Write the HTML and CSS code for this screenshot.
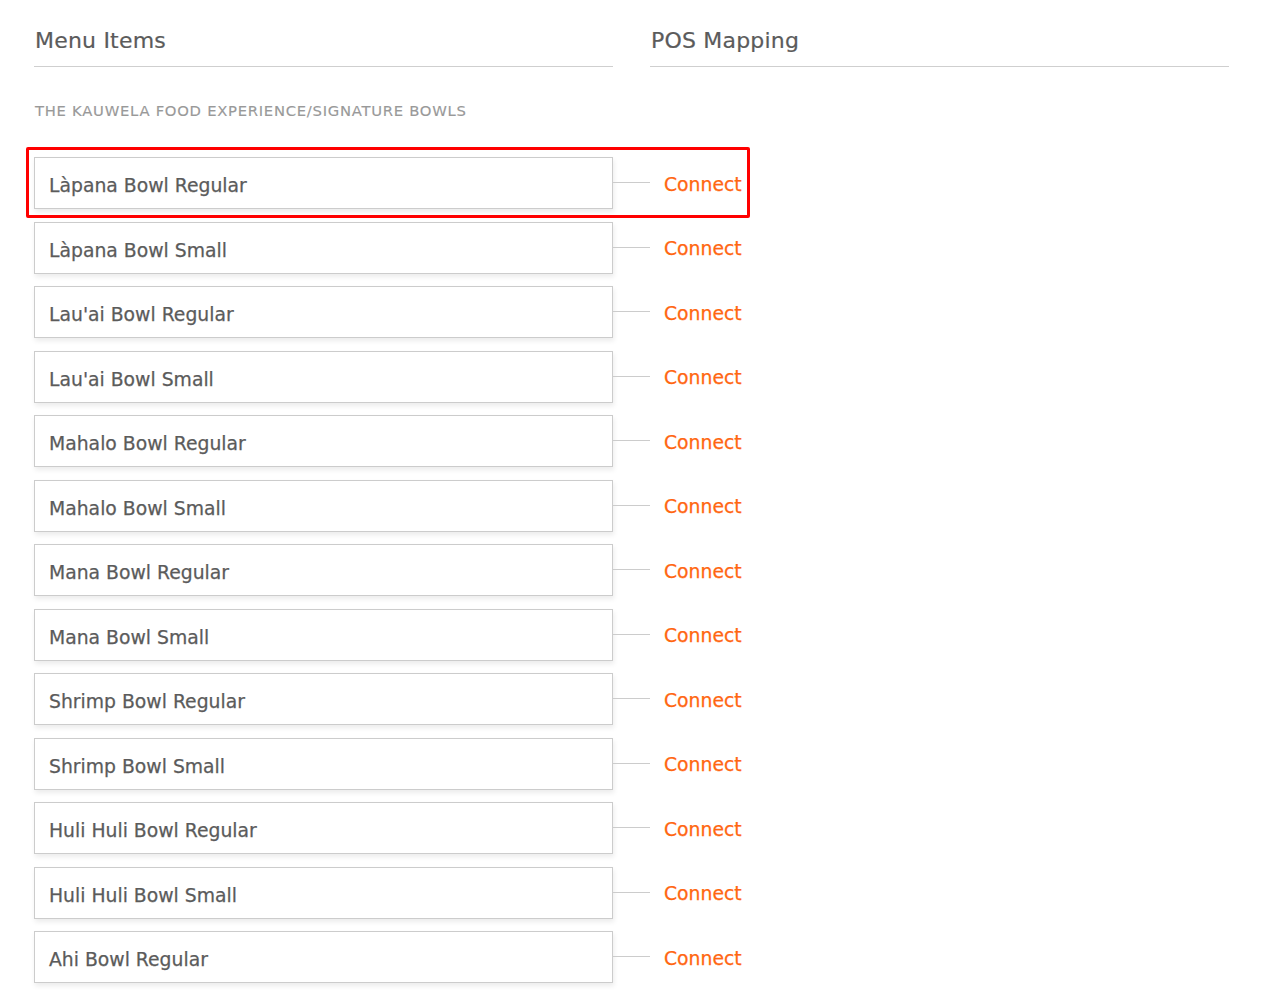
FILE: index.html
```html
<!DOCTYPE html>
<html lang="en">
<head>
<meta charset="utf-8">
<title>POS Mapping</title>
<link rel="stylesheet" href="styles.css">
</head>
<body>
<div class="page">
  <div class="headers">
    <h2 class="col-title">Menu Items</h2>
    <h2 class="col-title">POS Mapping</h2>
  </div>
  <div class="category">THE KAUWELA FOOD EXPERIENCE/SIGNATURE BOWLS</div>
  <ul class="rows">
    <li class="row highlight"><div class="item">Làpana Bowl Regular</div><span class="link-line"></span><a class="connect">Connect</a></li>
    <li class="row"><div class="item">Làpana Bowl Small</div><span class="link-line"></span><a class="connect">Connect</a></li>
    <li class="row"><div class="item">Lau'ai Bowl Regular</div><span class="link-line"></span><a class="connect">Connect</a></li>
    <li class="row"><div class="item">Lau'ai Bowl Small</div><span class="link-line"></span><a class="connect">Connect</a></li>
    <li class="row"><div class="item">Mahalo Bowl Regular</div><span class="link-line"></span><a class="connect">Connect</a></li>
    <li class="row"><div class="item">Mahalo Bowl Small</div><span class="link-line"></span><a class="connect">Connect</a></li>
    <li class="row"><div class="item">Mana Bowl Regular</div><span class="link-line"></span><a class="connect">Connect</a></li>
    <li class="row"><div class="item">Mana Bowl Small</div><span class="link-line"></span><a class="connect">Connect</a></li>
    <li class="row"><div class="item">Shrimp Bowl Regular</div><span class="link-line"></span><a class="connect">Connect</a></li>
    <li class="row"><div class="item">Shrimp Bowl Small</div><span class="link-line"></span><a class="connect">Connect</a></li>
    <li class="row"><div class="item">Huli Huli Bowl Regular</div><span class="link-line"></span><a class="connect">Connect</a></li>
    <li class="row"><div class="item">Huli Huli Bowl Small</div><span class="link-line"></span><a class="connect">Connect</a></li>
    <li class="row"><div class="item">Ahi Bowl Regular</div><span class="link-line"></span><a class="connect">Connect</a></li>
  </ul>
</div>
</body>
</html>
```
FILE: styles.css
```css
html, body {
  margin: 0;
  padding: 0;
  background: #fff;
}
body {
  font-family: "DejaVu Sans", "Liberation Sans", sans-serif;
  color: #5b5b5b;
  overflow: hidden;
}
.page {
  padding: 0 36px 0 34px;
}
.headers {
  display: grid;
  grid-template-columns: 579px 579px;
  column-gap: 37px;
}
.col-title {
  margin: 0;
  padding: 26px 0 0 1px;
  height: 40px;
  font-size: 22px;
  font-weight: normal;
  line-height: 30px;
  letter-spacing: 0.2px;
  color: #5b5b5b;
  border-bottom: 1px solid #cfcfcf;
  -webkit-text-stroke: 0.2px #5b5b5b;
}
.category {
  margin: 36px 0 0 1px;
  font-size: 14.8px;
  line-height: 16px;
  letter-spacing: 0.72px;
  color: #999999;
  -webkit-text-stroke: 0.15px #999999;
}
.rows {
  list-style: none;
  margin: 38px 0 0 0;
  padding: 0;
}
.row {
  position: relative;
  display: flex;
  align-items: center;
  height: 52px;
  margin-bottom: 12.5px;
}
.highlight::after {
  content: "";
  position: absolute;
  left: -8px;
  top: -10px;
  width: 724px;
  height: 71px;
  box-sizing: border-box;
  border: 3px solid #ff0000;
  border-radius: 2px;
  pointer-events: none;
}
.item {
  box-sizing: border-box;
  width: 579px;
  height: 52px;
  padding: 5px 14px 0 14px;
  display: flex;
  align-items: center;
  border: 1px solid #cccccc;
  box-shadow: 1px 3px 5px rgba(0, 0, 0, 0.08);
  background: #fff;
  font-size: 18.8px;
  color: #5b5b5b;
  -webkit-text-stroke: 0.25px #5b5b5b;
}
.link-line {
  width: 37px;
  height: 1px;
  background: #cccccc;
  margin-top: -1px;
}
.connect {
  margin-left: 14px;
  margin-top: 2px;
  font-size: 18.8px;
  color: #ff6611;
  cursor: pointer;
  -webkit-text-stroke: 0.25px #ff6611;
}
```
